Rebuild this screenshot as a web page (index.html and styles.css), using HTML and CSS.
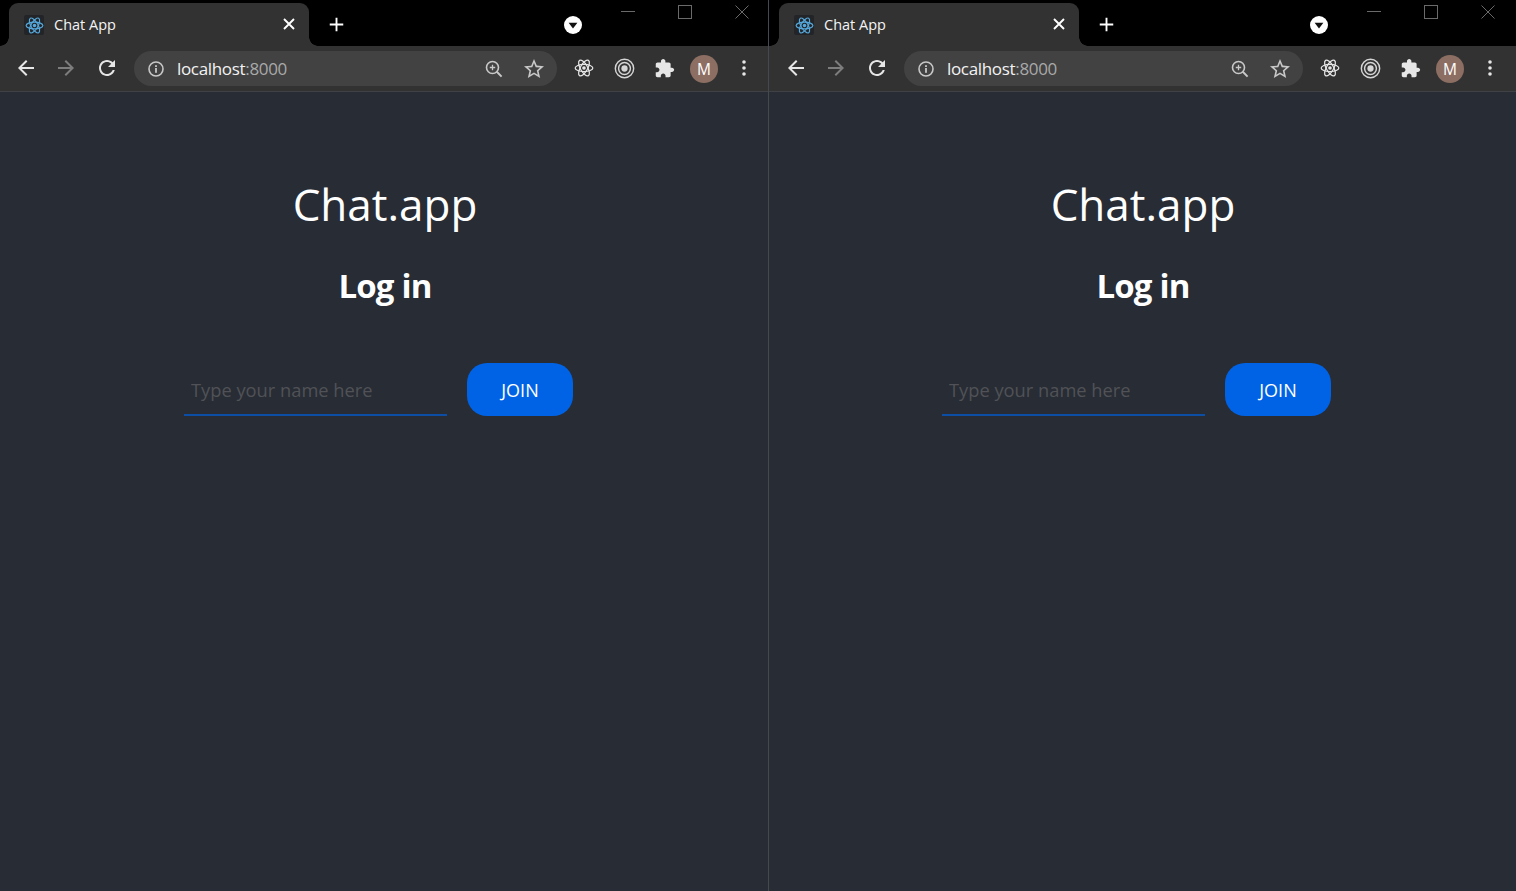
FILE: index.html
```html
<!DOCTYPE html>
<html lang="en">
<head>
<meta charset="utf-8">
<title>Chat App</title>
<link rel="stylesheet" href="styles.css">
</head>
<body>
<svg class="sprites" aria-hidden="true">
  <symbol id="i-back" viewBox="0 0 24 24"><path d="M20 11H7.83l5.59-5.59L12 4l-8 8 8 8 1.41-1.41L7.83 13H20v-2z"/></symbol>
  <symbol id="i-reload" viewBox="0 0 24 24"><path d="M17.65 6.35C16.2 4.9 14.21 4 12 4c-4.42 0-7.99 3.58-7.99 8s3.57 8 7.99 8c3.73 0 6.84-2.55 7.73-6h-2.08c-.82 2.33-3.04 4-5.65 4-3.31 0-6-2.69-6-6s2.69-6 6-6c1.66 0 3.14.69 4.22 1.78L13 11h7V4l-2.35 2.35z"/></symbol>
  <symbol id="i-info" viewBox="0 0 16 16"><circle cx="8" cy="8" r="7" fill="none" stroke="currentColor" stroke-width="1.6"/><rect x="7.1" y="7" width="1.8" height="4.8"/><rect x="7.1" y="4.2" width="1.8" height="1.8"/></symbol>
  <symbol id="i-zoom" viewBox="0 0 18 18"><circle cx="7.5" cy="7.5" r="6" fill="none" stroke="currentColor" stroke-width="1.6"/><path d="M11.8 11.8L16.6 16.6" fill="none" stroke="currentColor" stroke-width="2"/><path d="M7.5 4.8v5.4M4.8 7.5h5.4" fill="none" stroke="currentColor" stroke-width="1.3"/></symbol>
  <symbol id="i-star" viewBox="0 0 24 24"><path d="M22 9.24l-7.19-.62L12 2 9.19 8.63 2 9.24l5.46 4.73L5.82 21 12 17.27 18.18 21l-1.63-7.03L22 9.24zM12 15.4l-3.76 2.27 1-4.28-3.32-2.88 4.38-.38L12 6.1l1.71 4.04 4.38.38-3.32 2.88 1 4.28L12 15.4z"/></symbol>
  <symbol id="i-react" viewBox="0 0 24 24"><g fill="none" stroke="currentColor" stroke-width="1.5"><ellipse cx="12" cy="12" rx="10.6" ry="4.3"/><ellipse cx="12" cy="12" rx="10.6" ry="4.3" transform="rotate(60 12 12)"/><ellipse cx="12" cy="12" rx="10.6" ry="4.3" transform="rotate(120 12 12)"/></g><circle cx="12" cy="12" r="2.2"/></symbol>
  <symbol id="i-target" viewBox="0 0 22 22"><circle cx="11" cy="11" r="9.6" fill="none" stroke="currentColor" stroke-width="1.5"/><circle cx="11" cy="11" r="6.2" fill="none" stroke="currentColor" stroke-width="1.5"/><circle cx="11" cy="11" r="3.3"/></symbol>
  <symbol id="i-puzzle" viewBox="0 0 24 24"><path d="M20.5 11H19V7c0-1.1-.9-2-2-2h-4V3.5C13 2.12 11.88 1 10.5 1S8 2.12 8 3.5V5H4c-1.1 0-1.99.9-1.99 2v3.8H3.5c1.49 0 2.7 1.21 2.7 2.7s-1.21 2.7-2.7 2.7H2V20c0 1.1.9 2 2 2h3.8v-1.5c0-1.49 1.21-2.7 2.7-2.7 1.49 0 2.7 1.21 2.7 2.7V22H17c1.1 0 2-.9 2-2v-4h1.5c1.38 0 2.5-1.12 2.5-2.5S21.88 11 20.5 11z"/></symbol>
  <symbol id="i-dots" viewBox="0 0 4 16"><circle cx="2" cy="2" r="1.8"/><circle cx="2" cy="8" r="1.8"/><circle cx="2" cy="14" r="1.8"/></symbol>
  <symbol id="i-close" viewBox="0 0 12 12"><path d="M1 1l10 10M11 1L1 11" fill="none" stroke="currentColor" stroke-width="1.9"/></symbol>
  <symbol id="i-plus" viewBox="0 0 16 16"><path d="M8 .8v14.4M.8 8h14.4" fill="none" stroke="currentColor" stroke-width="2"/></symbol>
  <symbol id="i-drop" viewBox="0 0 18 18"><circle cx="9" cy="9" r="9" fill="#fff"/><path d="M4.6 6.8h8.8L9 12.4z" fill="#111"/></symbol>
  <symbol id="i-min" viewBox="0 0 14 14"><path d="M0 6.5h14" fill="none" stroke="currentColor"/></symbol>
  <symbol id="i-max" viewBox="0 0 14 14"><rect x=".5" y=".5" width="13" height="13" fill="none" stroke="currentColor"/></symbol>
  <symbol id="i-x" viewBox="0 0 14 14"><path d="M.5.5l13 13M13.5.5l-13 13" fill="none" stroke="currentColor"/></symbol>
</svg>

<div class="desktop">
  <section class="window window-left">
    <header class="tabstrip">
      <div class="tab">
        <span class="favicon"><svg class="favicon-glyph"><use href="#i-react"/></svg></span>
        <span class="tab-title">Chat App</span>
        <svg class="tab-close"><use href="#i-close"/></svg>
      </div>
      <svg class="new-tab"><use href="#i-plus"/></svg>
      <svg class="tab-search"><use href="#i-drop"/></svg>
      <div class="controls">
        <span class="control"><svg class="control-glyph"><use href="#i-min"/></svg></span>
        <span class="control"><svg class="control-glyph"><use href="#i-max"/></svg></span>
        <span class="control"><svg class="control-glyph"><use href="#i-x"/></svg></span>
      </div>
    </header>
    <nav class="toolbar">
      <span class="tool"><svg class="glyph"><use href="#i-back"/></svg></span>
      <span class="tool tool-off"><svg class="glyph"><use href="#i-back"/></svg></span>
      <span class="tool tool-reload"><svg class="glyph"><use href="#i-reload"/></svg></span>
      <div class="omnibox">
        <svg class="omni-info"><use href="#i-info"/></svg>
        <span class="url">localhost<span class="url-port">:8000</span></span>
        <span class="omni-tool"><svg class="omni-zoom"><use href="#i-zoom"/></svg></span>
        <span class="omni-tool"><svg class="glyph"><use href="#i-star"/></svg></span>
      </div>
      <span class="tool"><svg class="glyph-react"><use href="#i-react"/></svg></span>
      <span class="tool"><svg class="glyph-target"><use href="#i-target"/></svg></span>
      <span class="tool"><svg class="glyph-puzzle"><use href="#i-puzzle"/></svg></span>
      <span class="tool"><span class="avatar">M</span></span>
      <span class="tool"><svg class="glyph-dots"><use href="#i-dots"/></svg></span>
    </nav>
    <main class="page">
      <h1 class="brand">Chat.app</h1>
      <h2 class="heading">Log in</h2>
      <form class="join-form">
        <input class="name-input" type="text" placeholder="Type your name here">
        <button class="join-btn" type="button">JOIN</button>
      </form>
    </main>
  </section>

  <section class="window window-right">
    <header class="tabstrip">
      <div class="tab">
        <span class="favicon"><svg class="favicon-glyph"><use href="#i-react"/></svg></span>
        <span class="tab-title">Chat App</span>
        <svg class="tab-close"><use href="#i-close"/></svg>
      </div>
      <svg class="new-tab"><use href="#i-plus"/></svg>
      <svg class="tab-search"><use href="#i-drop"/></svg>
      <div class="controls">
        <span class="control"><svg class="control-glyph"><use href="#i-min"/></svg></span>
        <span class="control"><svg class="control-glyph"><use href="#i-max"/></svg></span>
        <span class="control"><svg class="control-glyph"><use href="#i-x"/></svg></span>
      </div>
    </header>
    <nav class="toolbar">
      <span class="tool"><svg class="glyph"><use href="#i-back"/></svg></span>
      <span class="tool tool-off"><svg class="glyph"><use href="#i-back"/></svg></span>
      <span class="tool tool-reload"><svg class="glyph"><use href="#i-reload"/></svg></span>
      <div class="omnibox">
        <svg class="omni-info"><use href="#i-info"/></svg>
        <span class="url">localhost<span class="url-port">:8000</span></span>
        <span class="omni-tool"><svg class="omni-zoom"><use href="#i-zoom"/></svg></span>
        <span class="omni-tool"><svg class="glyph"><use href="#i-star"/></svg></span>
      </div>
      <span class="tool"><svg class="glyph-react"><use href="#i-react"/></svg></span>
      <span class="tool"><svg class="glyph-target"><use href="#i-target"/></svg></span>
      <span class="tool"><svg class="glyph-puzzle"><use href="#i-puzzle"/></svg></span>
      <span class="tool"><span class="avatar">M</span></span>
      <span class="tool"><svg class="glyph-dots"><use href="#i-dots"/></svg></span>
    </nav>
    <main class="page">
      <h1 class="brand">Chat.app</h1>
      <h2 class="heading">Log in</h2>
      <form class="join-form">
        <input class="name-input" type="text" placeholder="Type your name here">
        <button class="join-btn" type="button">JOIN</button>
      </form>
    </main>
  </section>
</div>
</body>
</html>
```

FILE: styles.css
```css
* { box-sizing: border-box; }

html, body {
  margin: 0;
  height: 100%;
  overflow: hidden;
  background: #282c34;
  font-family: "Open Sans", "Liberation Sans", sans-serif;
}

.sprites { position: absolute; width: 0; height: 0; }

.desktop { display: flex; height: 891px; }

.window {
  position: relative;
  display: flex;
  flex-direction: column;
  height: 100%;
}
.window-left { width: 770px; }
.window-right { width: 746px; }
.window-left::after {
  content: "";
  position: absolute;
  top: 0;
  bottom: 0;
  right: 1px;
  width: 1px;
  background: #45484e;
}

/* tab strip */
.tabstrip {
  display: flex;
  align-items: flex-end;
  height: 46px;
  padding-left: 9px;
  background: #000;
}

.tab {
  position: relative;
  display: flex;
  align-items: center;
  width: 300px;
  height: 43px;
  padding: 0 14px 0 15px;
  background: #323232;
  border-radius: 9px 9px 0 0;
  color: #fff;
}
.tab::before,
.tab::after {
  content: "";
  position: absolute;
  bottom: 0;
  width: 9px;
  height: 9px;
}
.tab::before {
  left: -9px;
  background: radial-gradient(circle at 0 0, #000 8.5px, #323232 9px);
}
.tab::after {
  right: -9px;
  background: radial-gradient(circle at 100% 0, #000 8.5px, #323232 9px);
}

.favicon {
  display: flex;
  align-items: center;
  justify-content: center;
  width: 20px;
  height: 20px;
  margin-top: 1px;
  background: #232428;
  border-radius: 2px;
}
.favicon-glyph { width: 19px; height: 19px; fill: #55a9dc; color: #55a9dc; }

.tab-title {
  flex: 1;
  margin-left: 10px;
  font-size: 14.5px;
  color: #f4f4f4;
  white-space: nowrap;
}

.tab-close { width: 12px; height: 12px; margin-top: -1px; color: #fff; fill: #fff; }

.new-tab {
  width: 15px;
  height: 15px;
  margin: 0 0 14px 20px;
  color: #fff;
}

.tab-search {
  width: 18px;
  height: 18px;
  margin: 0 0 12px auto;
}

.controls {
  display: flex;
  align-self: flex-start;
  margin-left: 17px;
  padding-top: 5px;
}
.control {
  display: flex;
  justify-content: center;
  width: 57px;
  color: #6a6a6a;
}
.control-glyph { width: 14px; height: 14px; }

/* toolbar */
.toolbar {
  display: flex;
  align-items: center;
  height: 46px;
  padding: 0 6px 1px 6px;
  background: #323232;
  border-bottom: 1px solid #3f4146;
}

.tool {
  display: flex;
  align-items: center;
  justify-content: center;
  flex: none;
  width: 40px;
  height: 40px;
  color: #e6e6e6;
  fill: #e6e6e6;
}
.tool-off { fill: #7d7d7d; color: #7d7d7d; }
.tool-off .glyph { transform: scaleX(-1); }
.tool-reload { padding-left: 2px; }

.glyph { width: 24px; height: 24px; }
.glyph-react { width: 20px; height: 20px; }
.glyph-target { width: 21px; height: 21px; color: #d5d5d5; fill: #d5d5d5; }
.glyph-puzzle { width: 21px; height: 21px; }
.glyph-dots { width: 4px; height: 16px; }

.omnibox {
  display: flex;
  align-items: center;
  flex: 1;
  min-width: 0;
  height: 35px;
  margin: 1px 7px 0 8px;
  padding: 0 3px 0 14px;
  background: #424242;
  border-radius: 18px;
  color: #c8c8c8;
  fill: #c8c8c8;
}
.omni-info { width: 16px; height: 16px; flex: none; }
.url {
  flex: 1;
  margin-left: 13px;
  font-size: 17px;
  letter-spacing: -0.33px;
  color: #f2f2f2;
  white-space: nowrap;
}
.url-port { color: #a9a9a9; }
.omni-tool {
  display: flex;
  align-items: center;
  justify-content: center;
  width: 40px;
  height: 35px;
}
.omni-zoom { width: 18px; height: 18px; }

.avatar {
  display: flex;
  align-items: center;
  justify-content: center;
  width: 28px;
  height: 28px;
  margin-top: 2px;
  border-radius: 50%;
  background: #8d6e63;
  color: #fff;
  font-size: 15.5px;
}

/* page */
.page {
  flex: 1;
  display: flex;
  flex-direction: column;
  align-items: center;
  background: #282c34;
  color: #fff;
}

.brand {
  margin: 84px 0 0;
  font-size: 44px;
  font-weight: 400;
  line-height: 57px;
}

.heading {
  margin: 31px 0 0;
  font-size: 33px;
  font-weight: 700;
  line-height: 44px;
  letter-spacing: -0.8px;
}

.join-form {
  display: flex;
  align-items: flex-end;
  gap: 20px;
  margin-top: 55px;
  padding-right: 13px;
}

.name-input {
  width: 263px;
  height: 52px;
  padding: 0 7px;
  background: transparent;
  border: 0;
  border-bottom: 2px solid #0c4da6;
  outline: 0;
  font: 400 18.3px "Open Sans", sans-serif;
  color: #fff;
}
.name-input::placeholder { color: #505257; opacity: 1; }

.join-btn {
  width: 106px;
  height: 53px;
  border: 0;
  border-radius: 20px;
  background: #0063e5;
  color: #fff;
  font: 400 18px "Open Sans", sans-serif;
}
```
